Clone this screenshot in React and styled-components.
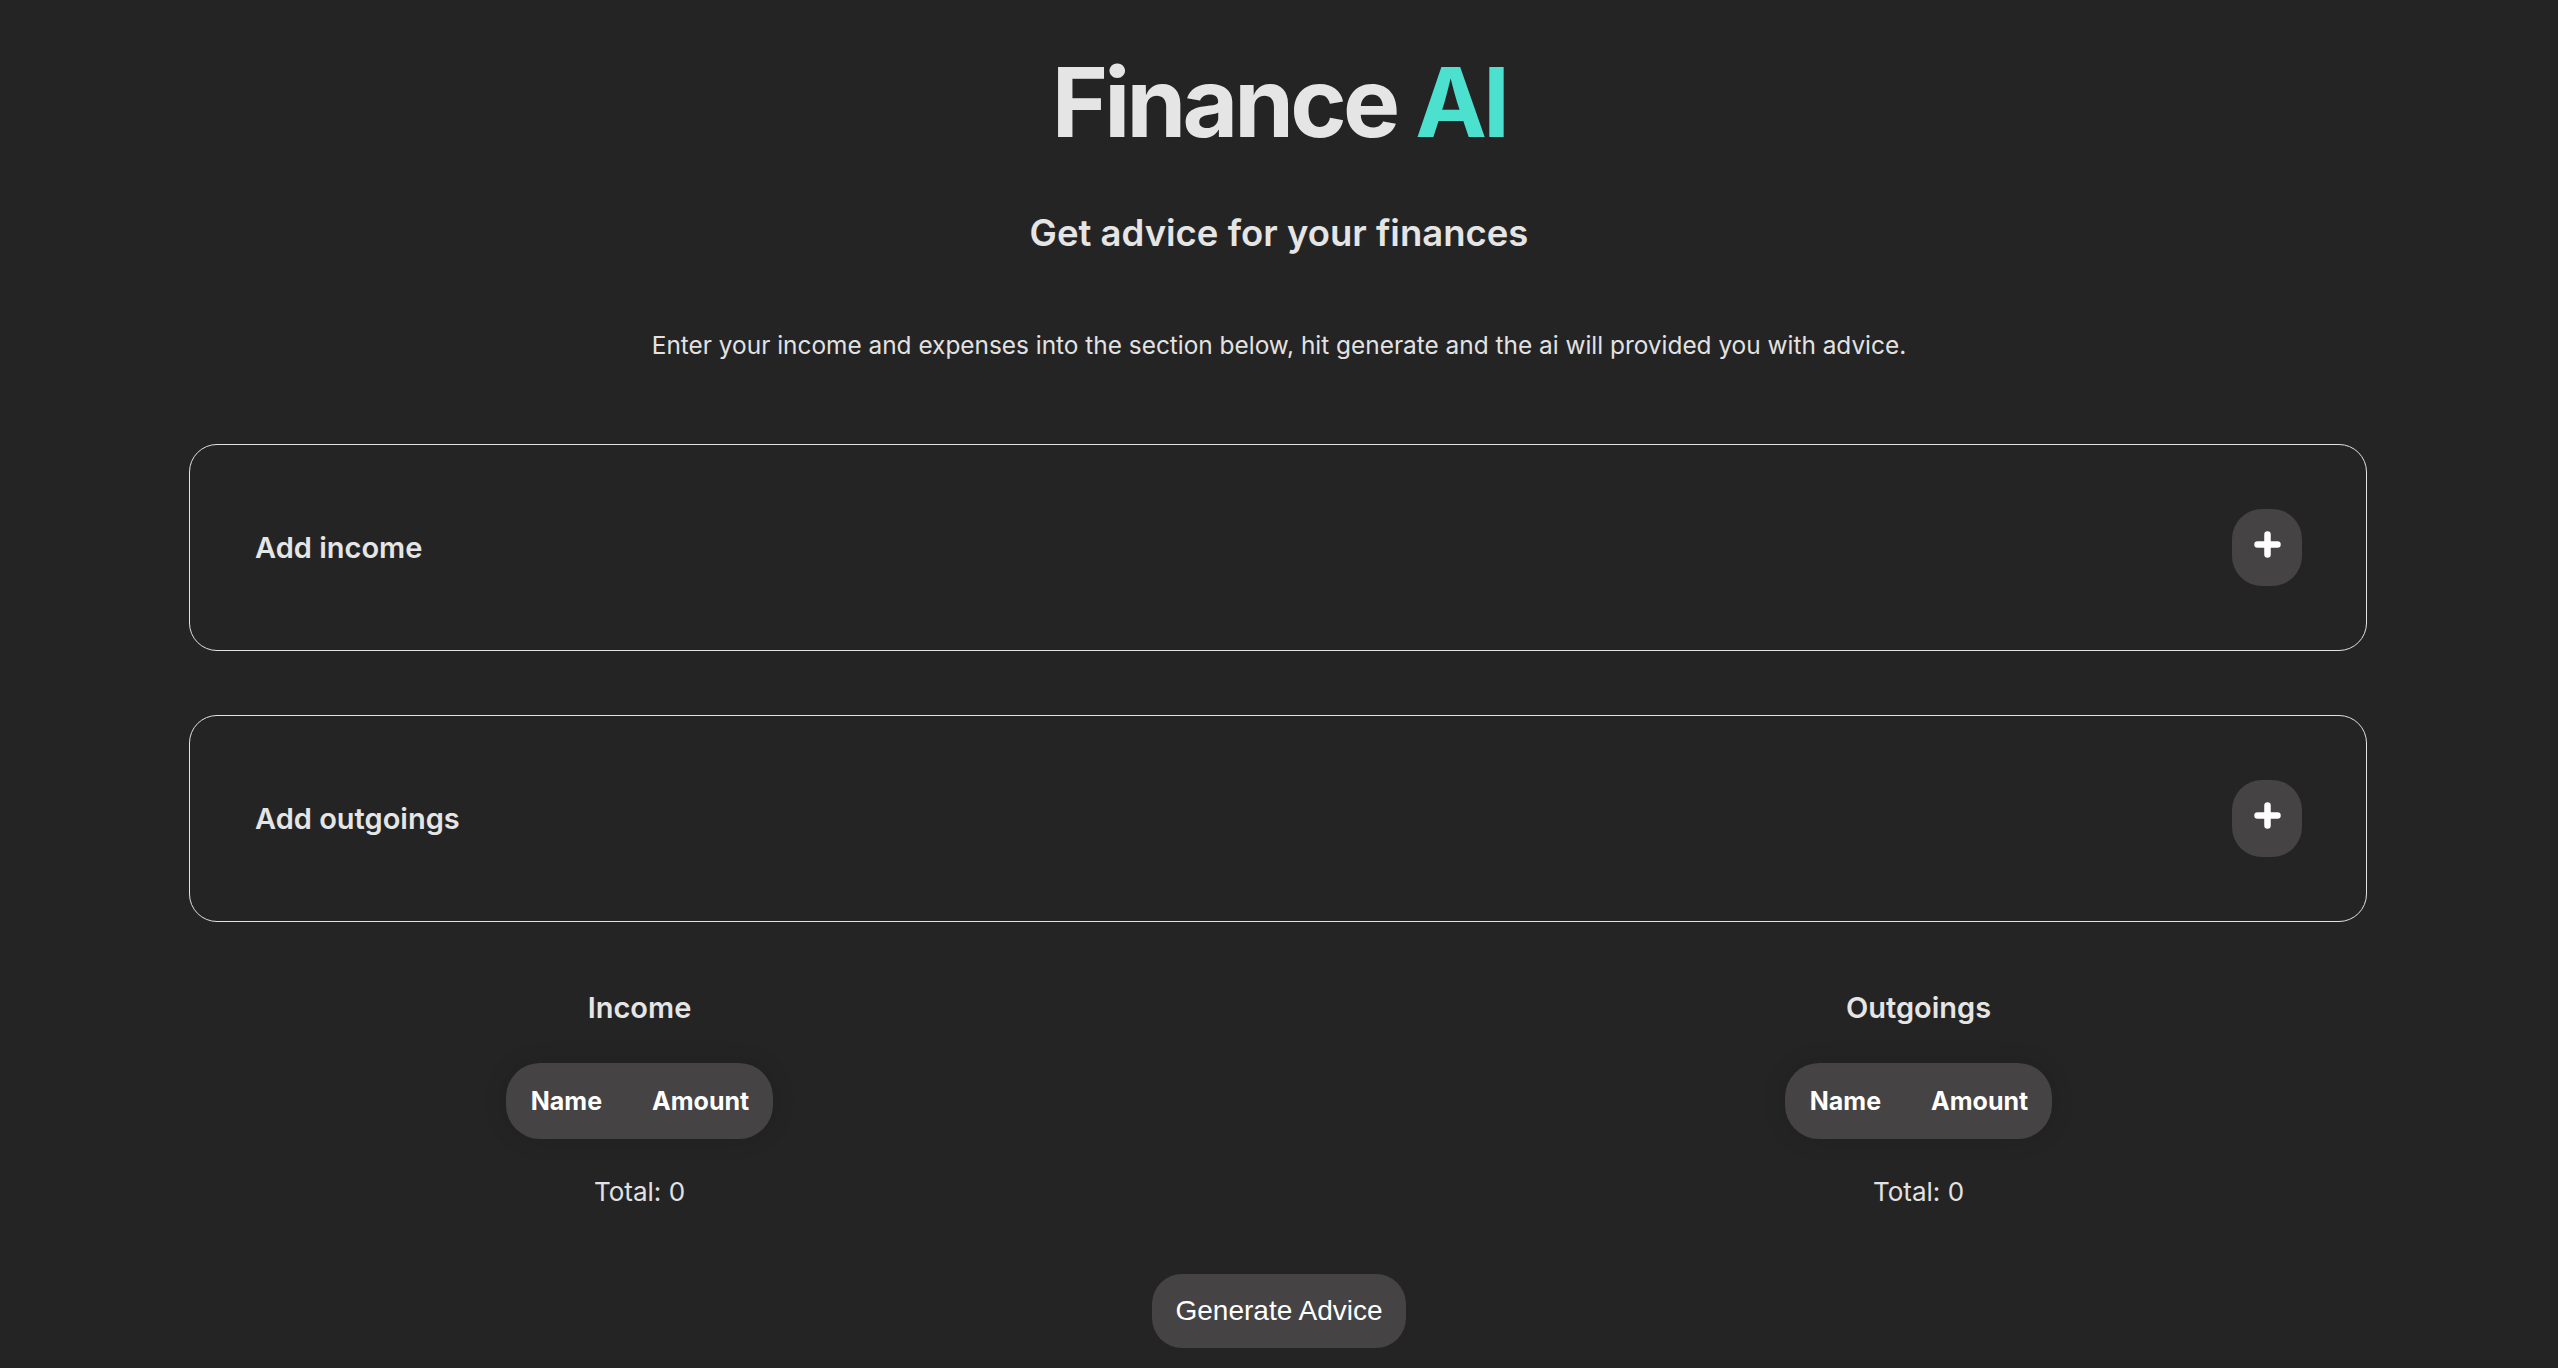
import React from 'react';
import styled, { createGlobalStyle } from 'styled-components';

const GlobalStyle = createGlobalStyle`
  body {
    margin: 0;
    background: #242424;
    color: #e4e4e4;
    font-family: Inter, "Liberation Sans", sans-serif;
  }
`;

/** Page wrapper */
const Page = styled.main`
  display: flex;
  flex-direction: column;
  align-items: center;
  min-height: 1368px;
  padding-top: 50px;
  box-sizing: border-box;
`;

const Title = styled.h1`
  margin: 0;
  font-size: 96px;
  line-height: 1.1;
  font-weight: 700;
  letter-spacing: -0.04em;
  color: #e5e5e5;
`;

const Accent = styled.span`
  color: #4ce0cf;
`;

const Subtitle = styled.h2`
  margin: 56px 0 0;
  font-size: 36.5px;
  line-height: 1.2;
  font-weight: 600;
  color: #e5e5e5;
`;

const Intro = styled.p`
  margin: 72px 0 0;
  font-size: 24.4px;
  line-height: 1.5;
  color: #e2e2e2;
`;

const Sections = styled.div`
  width: 100%;
  box-sizing: border-box;
  padding: 0 191px 0 189px;
  margin-top: 80px;
  display: flex;
  flex-direction: column;
  gap: 64px;
`;

/** Collapsible add-row card */
const Card = styled.div`
  display: flex;
  align-items: center;
  justify-content: space-between;
  padding: 64px 64px 64px 65px;
  border: 1px solid #e2e2e2;
  border-radius: 28px;
`;

const CardLabel = styled.span`
  font-size: 29px;
  font-weight: 600;
  color: #e5e5e5;
`;

const PlusButton = styled.button`
  display: flex;
  align-items: center;
  justify-content: center;
  width: 70px;
  height: 77px;
  border: none;
  border-radius: 30px;
  background: #454344;
  cursor: pointer;
  padding: 0;

  svg {
    transform: translateY(-3px);
  }
`;

const Summary = styled.div`
  width: 100%;
  display: grid;
  grid-template-columns: 1fr 1fr;
  margin-top: 69px;
`;

const Column = styled.div`
  display: flex;
  flex-direction: column;
  align-items: center;
`;

const ColumnTitle = styled.h3`
  margin: 0;
  font-size: 29px;
  line-height: 1.2;
  font-weight: 600;
  color: #e5e5e5;
`;

const Table = styled.table`
  margin-top: 37px;
  border-collapse: separate;
  border-spacing: 0;
  background: #454344;
  border-radius: 34px;
  height: 76px;
  box-shadow: 0 0 24px rgba(0, 0, 0, 0.12);
`;

const Th = styled.th`
  padding: 0 ${({ last }) => (last ? '24px' : '25px')} 0 25px;
  font-size: 25px;
  font-weight: 700;
  color: #ffffff;
`;

const Total = styled.p`
  margin: 37px 0 0;
  font-size: 26px;
  line-height: 1.2;
  color: #e2e2e2;
`;

const GenerateButton = styled.button`
  margin-top: 67px;
  padding: 20px 23px;
  border: none;
  border-radius: 30px;
  background: #454344;
  color: #ffffff;
  font-family: "Liberation Sans", Arial, sans-serif;
  font-size: 28px;
  line-height: 34px;
  cursor: pointer;
`;

const PlusIcon = () => (
  <svg width="27" height="27" viewBox="0 0 27 27" aria-hidden="true">
    <path d="M13.5 3.5v20M3.5 13.5h20" stroke="#ffffff" strokeWidth="6.5" strokeLinecap="round" />
  </svg>
);

const AddCard = ({ label }) => (
  <Card>
    <CardLabel>{label}</CardLabel>
    <PlusButton aria-label={label}>
      <PlusIcon />
    </PlusButton>
  </Card>
);

const SummaryColumn = ({ title }) => (
  <Column>
    <ColumnTitle>{title}</ColumnTitle>
    <Table>
      <thead>
        <tr>
          <Th>Name</Th>
          <Th last>Amount</Th>
        </tr>
      </thead>
    </Table>
    <Total>Total: 0</Total>
  </Column>
);

export default function App() {
  return (
    <>
      <GlobalStyle />
      <Page>
        <Title>
          Finance <Accent>AI</Accent>
        </Title>
        <Subtitle>Get advice for your finances</Subtitle>
        <Intro>
          Enter your income and expenses into the section below, hit generate and the ai will provided you with advice.
        </Intro>
        <Sections>
          <AddCard label="Add income" />
          <AddCard label="Add outgoings" />
        </Sections>
        <Summary>
          <SummaryColumn title="Income" />
          <SummaryColumn title="Outgoings" />
        </Summary>
        <GenerateButton>Generate Advice</GenerateButton>
      </Page>
    </>
  );
}
